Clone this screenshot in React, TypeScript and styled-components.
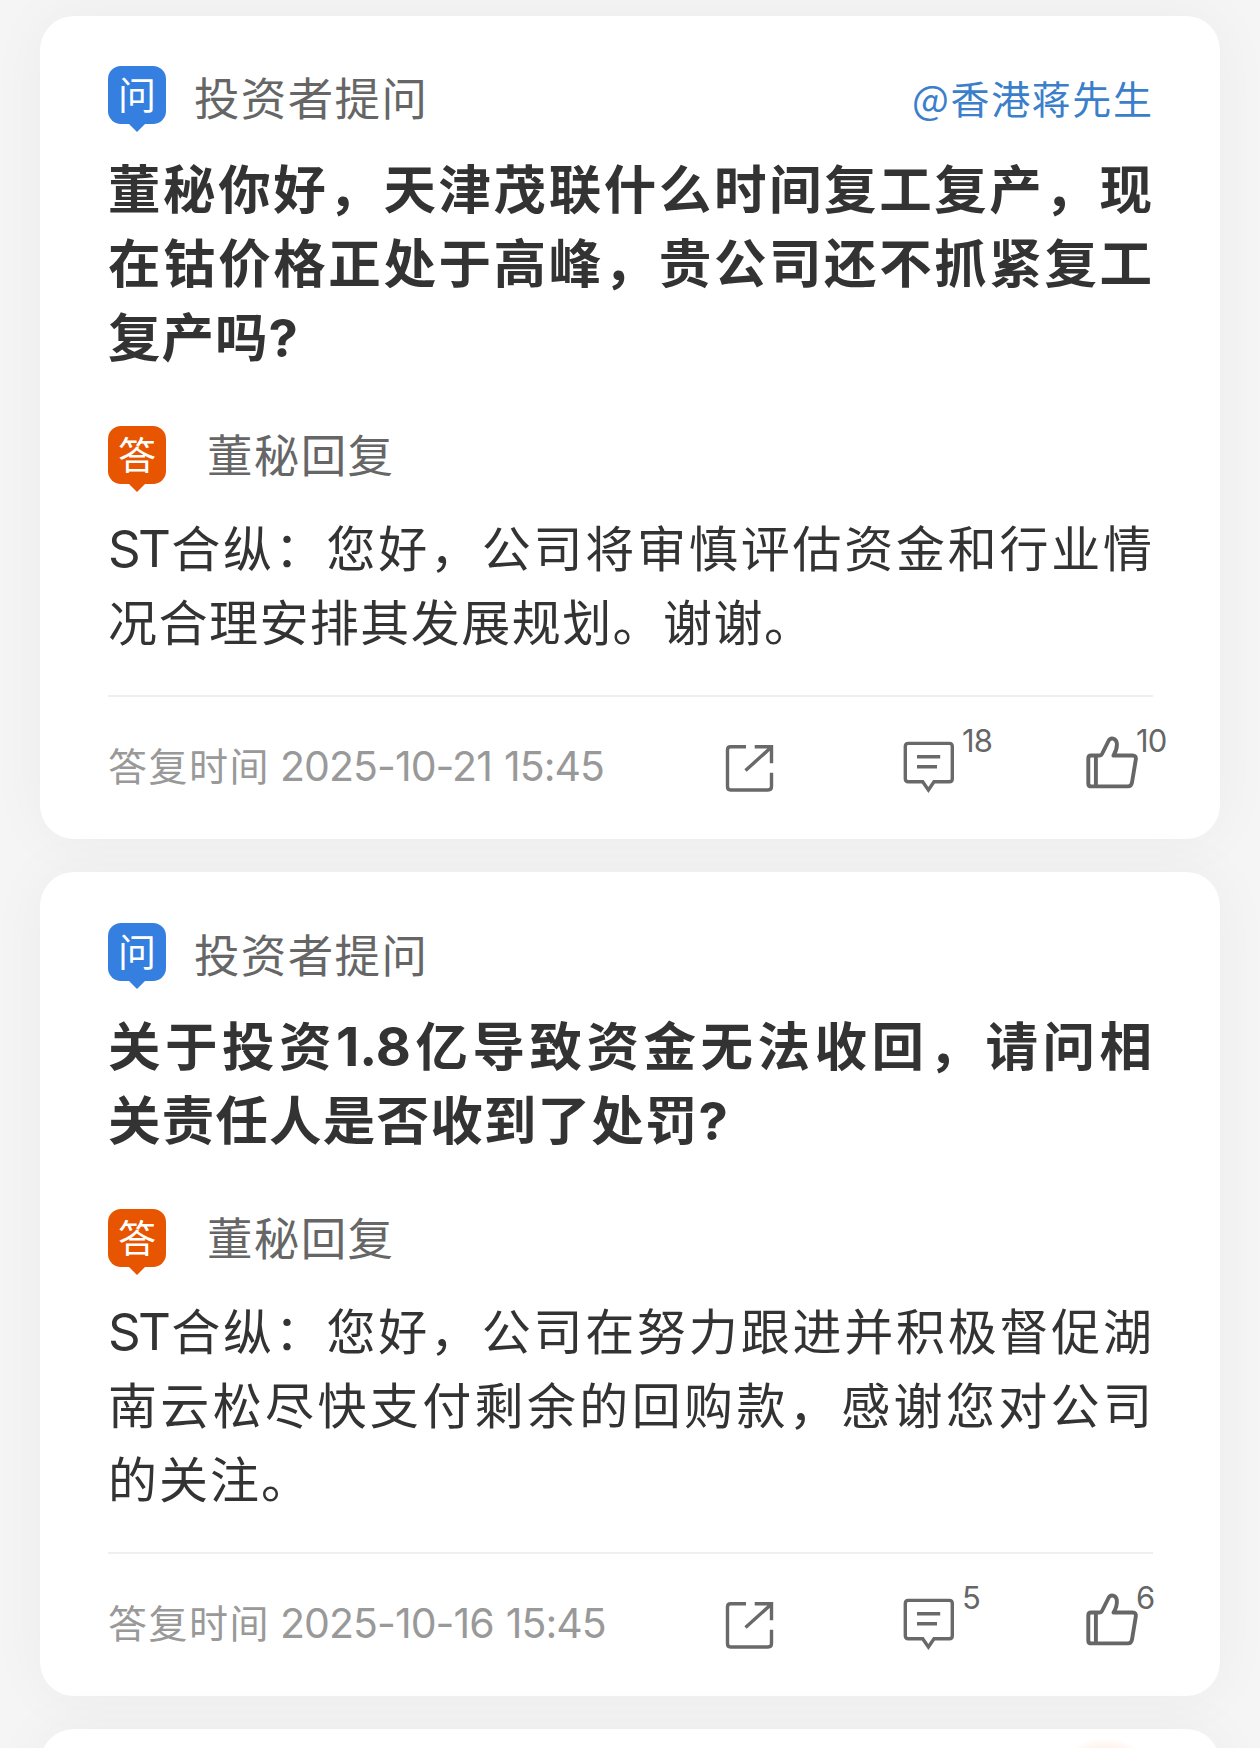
import React from 'react';
import styled, { createGlobalStyle } from 'styled-components';

const GlobalStyle = createGlobalStyle`
  * { box-sizing: border-box; }
  body {
    margin: 0;
    background: #f5f5f5;
    font-family: 'Noto Sans CJK SC', sans-serif;
    color: #333;
  }
`;

const Page = styled.main`
  width: 1260px;
  height: 1748px;
  padding: 16px 40px 0;
  display: flex;
  flex-direction: column;
  gap: 33px;
  overflow: hidden;
`;

const Card = styled.article<{ $top?: number }>`
  flex: none;
  padding: ${(p) => p.$top ?? 50}px 67px 0 68px;
  border-radius: 34px;
  background: #fff;
  box-shadow: 0 0 60px rgba(0, 0, 0, 0.045);
`;

const Header = styled.header`
  display: flex;
  align-items: flex-start;
  height: 66px;
`;

const BadgeBox = styled.div<{ $color: string }>`
  position: relative;
  width: 58px;
  height: 58px;
  border-radius: 13px;
  background: ${(p) => p.$color};
  color: #fff;
  font-size: 38px;
  line-height: 54px;
  text-align: center;

  &::after {
    content: '';
    position: absolute;
    left: 20px;
    top: 57px;
    border: solid transparent;
    border-width: 9px 9px 0;
    border-top-color: ${(p) => p.$color};
  }
`;

const Role = styled.div<{ $gap: number; $width: number; $line: number }>`
  width: ${(p) => p.$width}px;
  margin-left: ${(p) => p.$gap}px;
  color: #666;
  font-size: 45.5px;
  line-height: ${(p) => p.$line}px;
  white-space: nowrap;
  text-align: justify;
  text-align-last: justify;
`;

const Author = styled.a`
  width: 240px;
  margin-left: auto;
  margin-right: 1px;
  color: #3b7fcb;
  font-size: 39px;
  line-height: 62px;
  white-space: nowrap;
  text-align-last: justify;
`;

const Title = styled.h2`
  margin: 17px 0 55px;
  font-size: 52.5px;
  font-weight: 700;
  line-height: 74px;
`;

const Body = styled.p`
  margin: 17px 0 38px;
  font-size: 49px;
  line-height: 74px;
`;

const Line = styled.span<{ $width?: number }>`
  display: block;
  width: ${(p) => p.$width ?? 1044}px;
  height: 74px;
  white-space: nowrap;
  text-align: justify;
  text-align-last: justify;
`;

const Latin = styled.span<{ $size?: number; $spacing?: number }>`
  font-family: Inter, sans-serif;
  font-size: ${(p) => (p.$size ? `${p.$size}px` : '1em')};
  letter-spacing: ${(p) => p.$spacing ?? 0}px;
  line-height: 1;
`;

const Footer = styled.footer`
  display: flex;
  align-items: flex-start;
  height: 144px;
  padding-top: 31px;
  border-top: 2px solid #efefef;
`;

const Time = styled.div`
  display: flex;
  flex: none;
  align-items: baseline;
  gap: 10px;
  width: 616px;
  color: #999;
  font-size: 39px;
  line-height: 72px;
  letter-spacing: 1.5px;
  word-spacing: 1.5px;
  white-space: nowrap;
`;

const Action = styled.div<{ $width: number }>`
  display: flex;
  align-items: flex-start;
  flex: none;
  width: ${(p) => p.$width}px;
  color: #666;

  svg { flex: none; margin-top: 4px; }
`;

const Count = styled.span<{ $gap: number }>`
  margin-left: ${(p) => p.$gap}px;
  font-family: Inter, sans-serif;
  font-size: 31px;
  letter-spacing: -0.8px;
  line-height: 26px;
`;

const Glow = styled.div`
  width: 120px;
  height: 120px;
  margin-left: auto;
  margin-right: -12px;
  border-radius: 50%;
  background: radial-gradient(circle, #ffe2d2 30%, #fff4ee 62%, rgba(255, 255, 255, 0) 72%);
`;

const ShareIcon = () => (
  <svg width="50" height="64" viewBox="0 0 50 64" fill="none" stroke="#696969" strokeWidth="3.4">
    <path d="M22 14.7H6.5Q3.5 14.7 3.5 18V54.5Q3.5 58 6.5 58H44Q47.5 58 47.5 54.5V40.7M30.7 14.7H47.5V31.3M21.500 38.500L47 15.500" />
  </svg>
);

const CommentIcon = () => (
  <svg width="54" height="64" viewBox="0 0 54 64" fill="none" stroke="#696969" strokeWidth="3.4">
    <path d="M6.300 11.400H47.300Q50.300 11.400 50.300 14.400V46.800Q50.300 49.800 47.300 49.800H32L26.400 58L20.700 49.800H6.300Q3.300 49.800 3.300 46.800V14.400Q3.300 11.400 6.300 11.400ZM15 24.700H38.200M15 34.800H35" />
  </svg>
);

const LikeIcon = () => (
  <svg width="54" height="64" viewBox="0 0 54 64" fill="none" stroke="#666" strokeWidth="3.9" strokeLinejoin="round">
    <path d="M6 23.500H14.800Q16.300 23.500 17 22L23.500 9C25.500 5 31 5.800 31.800 11Q32.500 17 28.500 23.500H47.500Q51.500 23.500 50.800 27.500L47 50.500Q46.300 54.400 43 54.400H6.300Q3.300 54.400 3.300 51.400V26.500Q3.300 23.500 6 23.500ZM10.900 23.500V54.400" />
  </svg>
);

type TextLine = { content: React.ReactNode; width?: number };

type Item = {
  top?: number;
  author?: string;
  question: TextLine[];
  answer: TextLine[];
  time: string;
  comments: number;
  likes: number;
};

const items: Item[] = [
  {
    author: '@香港蒋先生',
    question: [
      { content: '董秘你好，天津茂联什么时间复工复产，现' },
      { content: '在钴价格正处于高峰，贵公司还不抓紧复工' },
      { content: <>复产吗<Latin>?</Latin></>, width: 190 },
    ],
    answer: [
      { content: <><Latin $size={51} $spacing={-2.6}>ST</Latin>合纵：您好，公司将审慎评估资金和行业情</> },
      { content: '况合理安排其发展规划。谢谢。', width: 705 },
    ],
    time: '2025-10-21 15:45',
    comments: 18,
    likes: 10,
  },
  {
    top: 51,
    question: [
      { content: <>关于投资<Latin $size={54}>1.8</Latin>亿导致资金无法收回，请问相</> },
      { content: <>关责任人是否收到了处罚<Latin>?</Latin></>, width: 620 },
    ],
    answer: [
      { content: <><Latin $size={51} $spacing={-2.6}>ST</Latin>合纵：您好，公司在努力跟进并积极督促湖</> },
      { content: '南云松尽快支付剩余的回购款，感谢您对公司' },
      { content: '的关注。', width: 202 },
    ],
    time: '2025-10-16 15:45',
    comments: 5,
    likes: 6,
  },
];

const Lines = ({ lines }: { lines: TextLine[] }) => (
  <>
    {lines.map((line, i) => (
      <Line key={i} $width={line.width}>{line.content}</Line>
    ))}
  </>
);

const QuestionCard = ({ item }: { item: Item }) => (
  <Card $top={item.top}>
    <Header>
      <BadgeBox $color="#347fe0">问</BadgeBox>
      <Role $gap={28} $width={233} $line={60}>投资者提问</Role>
      {item.author && <Author>{item.author}</Author>}
    </Header>
    <Title><Lines lines={item.question} /></Title>
    <Header>
      <BadgeBox $color="#e85500">答</BadgeBox>
      <Role $gap={41} $width={186} $line={54}>董秘回复</Role>
    </Header>
    <Body><Lines lines={item.answer} /></Body>
    <Footer>
      <Time>
        <span>答复时间</span>
        <Latin $size={41} $spacing={-0.95}>{item.time}</Latin>
      </Time>
      <Action $width={178}><ShareIcon /></Action>
      <Action $width={183}>
        <CommentIcon />
        <Count $gap={6}>{item.comments}</Count>
      </Action>
      <Action $width={90}>
        <LikeIcon />
        <Count $gap={-3}>{item.likes}</Count>
      </Action>
    </Footer>
  </Card>
);

export default function App() {
  return (
    <>
      <GlobalStyle />
      <Page>
        {items.map((item) => (
          <QuestionCard key={item.time} item={item} />
        ))}
        <Card $top={10}>
          <Glow />
        </Card>
      </Page>
    </>
  );
}
